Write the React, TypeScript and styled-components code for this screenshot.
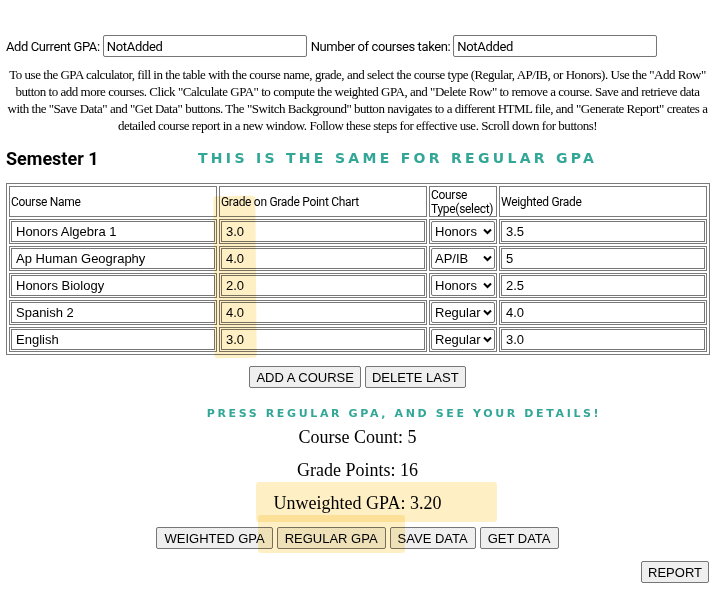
import React from "react";
import styled, { createGlobalStyle } from "styled-components";

const Global = createGlobalStyle`
  html, body { margin: 0; padding: 0; background: #fff; }
  body { font-family: "Liberation Serif", serif; color: #000; }
`;

const Page = styled.div`
  position: relative;
  width: 714px;
  height: 591px;
  overflow: hidden;
  box-sizing: border-box;
  padding: 35px 5px 0 6px;
`;

const TopRow = styled.div`
  display: flex;
  align-items: center;
  gap: 3px;
  height: 22px;
`;

const Label = styled.label`
  font-family: Roboto, "Liberation Sans", sans-serif;
  font-size: 13px;
  letter-spacing: -0.4px;
`;

const TextBox = styled.input<{ $w?: number }>`
  box-sizing: border-box;
  width: ${(p) => p.$w ?? 204}px;
  height: 22px;
  border: 1px solid #767676;
  border-radius: 2px;
  padding: 1px 3px;
  font-family: Roboto, "Liberation Sans", sans-serif;
  font-size: 13px;
  letter-spacing: -0.3px;
  color: #000;
  margin-right: 1px;
`;

const Instructions = styled.p`
  margin: 9px 0 0;
  text-align: center;
  font-family: "Liberation Serif", serif;
  font-size: 13px;
  line-height: 17px;
  letter-spacing: -0.48px;
  padding: 0 1px;
`;

const SemesterRow = styled.div`
  display: flex;
  align-items: center;
  margin-top: 11px;
  height: 26px;
`;

const SemesterTitle = styled.h3`
  margin: 0;
  font-family: Roboto, "Liberation Sans", sans-serif;
  font-weight: 700;
  font-size: 18px;
  width: 192px;
`;

const Teal = styled.div<{ $size: number; $ls: number }>`
  font-family: "DejaVu Sans", sans-serif;
  font-weight: 700;
  font-size: ${(p) => p.$size}px;
  letter-spacing: ${(p) => p.$ls}px;
  color: #33a797;
  white-space: nowrap;
`;

const Table = styled.table`
  margin-top: 12px;
  width: 704px;
  border: 1px solid #7a7a7a;
  border-collapse: separate;
  border-spacing: 2px;
  table-layout: fixed;
`;

const Th = styled.td<{ $w: number }>`
  width: ${(p) => p.$w}px;
  border: 1px solid #7a7a7a;
  padding: 0 1px;
  font-family: Roboto, "Liberation Sans", sans-serif;
  font-size: 12px;
  letter-spacing: -0.3px;
  line-height: 14px;
  height: 29px;
  vertical-align: middle;
`;

const Td = styled.td`
  border: 1px solid #7a7a7a;
  padding: 1px;
`;

const CellInput = styled.input`
  box-sizing: border-box;
  width: 100%;
  height: 21px;
  border: 1px solid #767676;
  border-radius: 0;
  padding: 0 4px;
  font-family: "Liberation Sans", Arial, sans-serif;
  font-size: 13px;
  color: #000;
  display: block;
`;

const FakeSelect = styled.div`
  box-sizing: border-box;
  width: 100%;
  height: 21px;
  border: 1px solid #767676;
  border-radius: 2px;
  padding: 0 2px 0 3px;
  display: flex;
  align-items: center;
  justify-content: space-between;
  font-family: "Liberation Sans", Arial, sans-serif;
  font-size: 13px;
  overflow: hidden;
`;

const Chevron = () => (
  <svg width="9" height="7" viewBox="0 0 9 7" style={{ flexShrink: 0 }}>
    <path d="M1 1.5 L4.5 5 L8 1.5" stroke="#000" strokeWidth="2" fill="none" />
  </svg>
);

const Center = styled.div<{ $mt: number; $shift?: number; $gap?: number }>`
  display: flex;
  justify-content: center;
  gap: ${(p) => p.$gap ?? 4}px;
  margin-top: ${(p) => p.$mt}px;
  padding-left: ${(p) => p.$shift ?? 0}px;
`;

const Button = styled.button<{ $px?: number }>`
  box-sizing: border-box;
  height: 22px;
  padding: 1px ${(p) => p.$px ?? 6}px;
  border: 1px solid #767676;
  border-radius: 2px;
  background: #efefef;
  font-family: "Liberation Sans", Arial, sans-serif;
  font-size: 13px;
  color: #000;
`;

const Stat = styled.div<{ $mt: number }>`
  text-align: center;
  margin-top: ${(p) => p.$mt}px;
  font-family: "Liberation Serif", serif;
  font-size: 18px;
  line-height: 20px;
`;

const RightRow = styled.div`
  display: flex;
  justify-content: flex-end;
  margin-top: 12px;
`;

const Highlight = styled.div<{ $x: number; $y: number; $w: number; $h: number; $r?: number }>`
  position: absolute;
  left: ${(p) => p.$x}px;
  top: ${(p) => p.$y}px;
  width: ${(p) => p.$w}px;
  height: ${(p) => p.$h}px;
  background: rgba(252, 214, 100, 0.38);
  transform: rotate(${(p) => p.$r ?? 0}deg);
  border-radius: 3px;
  pointer-events: none;
  mix-blend-mode: multiply;
`;

const rows = [
  { name: "Honors Algebra 1", grade: "3.0", type: "Honors", w: "3.5" },
  { name: "Ap Human Geography", grade: "4.0", type: "AP/IB", w: "5" },
  { name: "Honors Biology", grade: "2.0", type: "Honors", w: "2.5" },
  { name: "Spanish 2", grade: "4.0", type: "Regular", w: "4.0" },
  { name: "English", grade: "3.0", type: "Regular", w: "3.0" },
];

export default function App() {
  return (
    <Page>
      <Global />
      <TopRow>
        <Label>Add Current GPA:</Label>
        <TextBox defaultValue="NotAdded" />
        <Label>Number of courses taken:</Label>
        <TextBox defaultValue="NotAdded" />
      </TopRow>
      <Instructions>
        To use the GPA calculator, fill in the table with the course name, grade, and select the course type (Regular, AP/IB, or Honors). Use the "Add Row" button to add more courses. Click "Calculate GPA" to compute the weighted GPA, and "Delete Row" to remove a course. Save and retrieve data with the "Save Data" and "Get Data" buttons. The "Switch Background" button navigates to a different HTML file, and "Generate Report" creates a detailed course report in a new window. Follow these steps for effective use. Scroll down for buttons!
      </Instructions>
      <SemesterRow>
        <SemesterTitle>Semester 1</SemesterTitle>
        <Teal $size={14} $ls={3.3}>THIS IS THE SAME FOR REGULAR GPA</Teal>
      </SemesterRow>
      <Table>
        <tbody>
          <tr>
            <Th $w={204}>Course Name</Th>
            <Th $w={204}>Grade on Grade Point Chart</Th>
            <Th $w={64}>Course Type(select)</Th>
            <Th $w={204}>Weighted Grade</Th>
          </tr>
          {rows.map((r) => (
            <tr key={r.name}>
              <Td><CellInput defaultValue={r.name} /></Td>
              <Td><CellInput defaultValue={r.grade} /></Td>
              <Td>
                <FakeSelect>
                  <span>{r.type}</span>
                  <Chevron />
                </FakeSelect>
              </Td>
              <Td><CellInput defaultValue={r.w} /></Td>
            </tr>
          ))}
        </tbody>
      </Table>
      <Center $mt={11}>
        <Button>ADD A COURSE</Button>
        <Button>DELETE LAST</Button>
      </Center>
      <Center $mt={19} $shift={93}>
        <Teal $size={11} $ls={2.63}>PRESS REGULAR GPA, AND SEE YOUR DETAILS!</Teal>
      </Center>
      <Stat $mt={7}>Course Count: 5</Stat>
      <Stat $mt={13}>Grade Points: 16</Stat>
      <Stat $mt={13}>Unweighted GPA: 3.20</Stat>
      <Center $mt={14} $gap={4}>
        <Button $px={7}>WEIGHTED GPA</Button>
        <Button $px={7}>REGULAR GPA</Button>
        <Button $px={7}>SAVE DATA</Button>
        <Button $px={7}>GET DATA</Button>
      </Center>
      <RightRow>
        <Button>REPORT</Button>
      </RightRow>
      <Highlight $x={214} $y={196} $w={42} $h={162} $r={-0.5} />
      <Highlight $x={256} $y={482} $w={241} $h={40} />
      <Highlight $x={258} $y={515} $w={147} $h={38} />
    </Page>
  );
}
